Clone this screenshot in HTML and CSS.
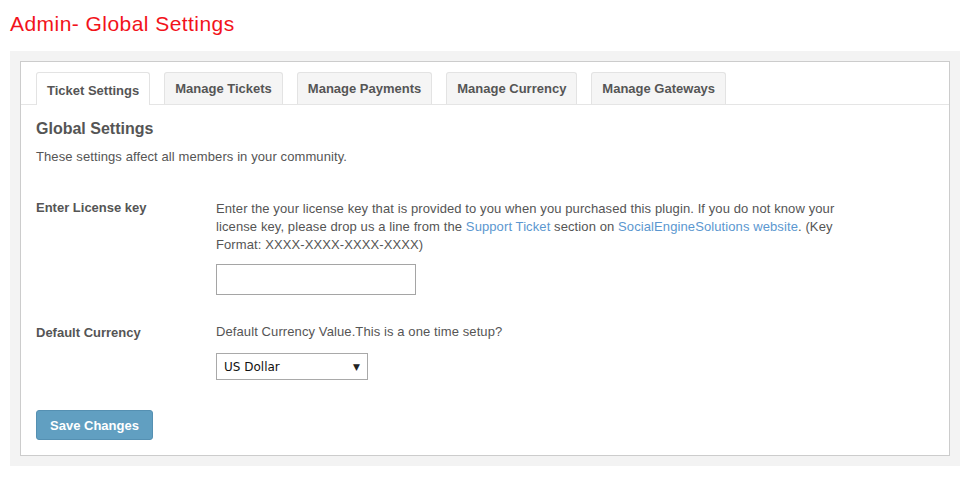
FILE: index.html
```html
<!DOCTYPE html>
<html>
<head>
<meta charset="utf-8">
<link rel="stylesheet" href="styles.css">
</head>
<body>
<h1 class="page-title">Admin- Global Settings</h1>
<div class="outer">
  <div class="panel">
    <ul class="tabs">
      <li class="tab active">Ticket Settings</li>
      <li class="tab">Manage Tickets</li>
      <li class="tab">Manage Payments</li>
      <li class="tab">Manage Currency</li>
      <li class="tab">Manage Gateways</li>
    </ul>
    <div class="content">
      <h2 class="section-title">Global Settings</h2>
      <p class="section-desc">These settings affect all members in your community.</p>
      <div class="field">
        <div class="label">Enter License key</div>
        <div class="element">
          <p class="hint hint-license">Enter the your license key that is provided to you when you purchased this plugin. If you do not know your license key, please drop us a line from the <a href="#">Support Ticket</a> section on <a href="#">SocialEngineSolutions website</a>. (Key Format: XXXX-XXXX-XXXX-XXXX)</p>
          <input class="text-input" type="text">
        </div>
      </div>
      <div class="field field-currency">
        <div class="label">Default Currency</div>
        <div class="element">
          <p class="hint">Default Currency Value.This is a one time setup?</p>
          <div class="select"><span>US Dollar</span><span class="arrow">&#9660;</span></div>
        </div>
      </div>
      <button class="save">Save Changes</button>
    </div>
  </div>
</div>
</body>
</html>
```
FILE: styles.css
```css
* { box-sizing: border-box; }
body {
  margin: 0;
  padding: 0 11px 0 10px;
  font-family: "Liberation Sans", Arial, sans-serif;
  color: #555;
  background: #fff;
}
.page-title {
  margin: 0;
  padding-top: 12px;
  height: 51px;
  font-size: 21px;
  font-weight: normal;
  color: #f2131b;
  letter-spacing: 0.45px;
}
.outer {
  background: #f3f3f3;
  padding: 10px;
  height: 415px;
}
.panel {
  background: #fff;
  border: 1px solid #ccc;
  height: 395px;
}
.tabs {
  list-style: none;
  margin: 0;
  padding: 10px 15px 0;
  display: flex;
  gap: 14px;
  border-bottom: 1px solid #e5e5e5;
  height: 43px;
}
.tab {
  height: 32px;
  padding: 0 10px;
  display: flex;
  align-items: center;
  font-size: 13px;
  font-weight: bold;
  color: #555;
  background: #f5f5f5;
  border: 1px solid #e3e3e3;
  border-bottom: none;
  border-radius: 3px 3px 0 0;
  white-space: nowrap;
}
.tab.active {
  background: #fff;
  height: 33px;
  padding-top: 2px;
}
.content {
  padding: 15px 15px 0;
}
.section-title {
  margin: 0;
  font-size: 16px;
  font-weight: bold;
  color: #555;
  line-height: 18px;
}
.section-desc {
  margin: 11px 0 0;
  font-size: 13px;
  line-height: 16px;
  color: #555;
  letter-spacing: 0.1px;
}
.field {
  display: flex;
  margin-top: 34px;
}
.field-currency { margin-top: 29px; }
.label {
  width: 180px;
  flex: none;
  font-size: 13px;
  font-weight: bold;
  color: #555;
  line-height: 18px;
}
.element { width: 625px; }
.hint {
  margin: 0;
  font-size: 13px;
  line-height: 18px;
  color: #555;
  letter-spacing: 0.1px;
}
.hint-license { padding-top: 1px; }
.hint a { color: #5b97d0; text-decoration: none; }
.text-input {
  display: block;
  margin-top: 10px;
  width: 200px;
  height: 31px;
  border: 1px solid #a5a5a5;
  background: #fff;
  padding: 0;
}
.field-currency .hint { line-height: 16px; }
.select {
  margin-top: 13px;
  width: 152px;
  height: 27px;
  border: 1px solid #a9a9a9;
  display: flex;
  align-items: center;
  justify-content: space-between;
  padding: 0 7px 0 7px;
  font-family: "DejaVu Sans", "Open Sans", sans-serif;
  font-size: 12px;
  color: #111;
}
.select .arrow { font-size: 9px; color: #222; }
.save {
  display: block;
  margin-top: 30px;
  width: 117px;
  height: 30px;
  background: #619fc1;
  border: 1px solid #5590b2;
  border-radius: 3px;
  color: #fff;
  font-family: "Liberation Sans", Arial, sans-serif;
  font-size: 13px;
  font-weight: bold;
  padding: 0;
}
```
